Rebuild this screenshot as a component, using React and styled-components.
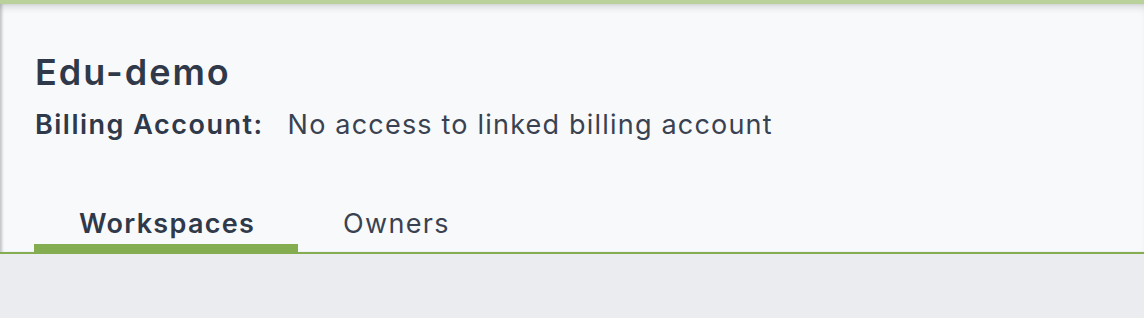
import React from "react";
import styled, { createGlobalStyle } from "styled-components";

const Global = createGlobalStyle`
  html, body { margin: 0; padding: 0; background: #ebecef; }
  body { font-family: Inter, "Open Sans", sans-serif; }
`;

const Page = styled.div`
  width: 1144px;
  height: 318px;
  display: flex;
  flex-direction: column;
  background: #ebecef;
  overflow: hidden;
`;

const TopBar = styled.div`
  height: 4px;
  background: #b9d29c;
  flex: none;
`;

const Header = styled.header`
  flex: none;
  background: #f8f9fb;
  box-shadow: inset 0 7px 9px -5px rgba(0, 0, 0, 0.18),
    inset 3px 0 3px -1px rgba(0, 0, 0, 0.2);
  padding: 46px 0 0 2px;
  display: flex;
  flex-direction: column;
  border-bottom: 2px solid #84ad52;
`;

const Info = styled.div`
  padding-left: 33px;
  color: #2f394a;
`;

const Title = styled.h1`
  margin: 0;
  font-size: 36px;
  line-height: 44px;
  font-weight: 600;
  letter-spacing: 2px;
`;

const BillingRow = styled.div`
  display: flex;
  gap: 24px;
  margin-top: 13px;
  font-size: 27px;
  line-height: 36px;
`;

const Label = styled.span`
  font-weight: 600;
  letter-spacing: 1.5px;
`;

const Value = styled.span`
  font-weight: 400;
  color: #3a4251;
  letter-spacing: 1.2px;
`;

const Tabs = styled.nav`
  display: flex;
  margin-top: 61px;
  padding-left: 32px;
`;

const Tab = styled.button`
  box-sizing: border-box;
  border: none;
  background: transparent;
  padding: 4px 43px 0 45px;
  height: 48px;
  font-family: inherit;
  font-size: 27px;
  line-height: 32px;
  font-weight: ${(p) => (p.$active ? 600 : 400)};
  color: ${(p) => (p.$active ? "#2f394a" : "#3a4251")};
  letter-spacing: 1.3px;
  box-shadow: ${(p) => (p.$active ? "inset 0 -8px 0 #84ad52" : "none")};
  cursor: pointer;
  display: flex;
  align-items: flex-start;
`;

export default function App() {
  return (
    <>
      <Global />
      <Page>
        <TopBar />
        <Header>
          <Info>
            <Title>Edu-demo</Title>
            <BillingRow>
              <Label>Billing Account:</Label>
              <Value>No access to linked billing account</Value>
            </BillingRow>
          </Info>
          <Tabs>
            <Tab $active>Workspaces</Tab>
            <Tab>Owners</Tab>
          </Tabs>
        </Header>
      </Page>
    </>
  );
}
